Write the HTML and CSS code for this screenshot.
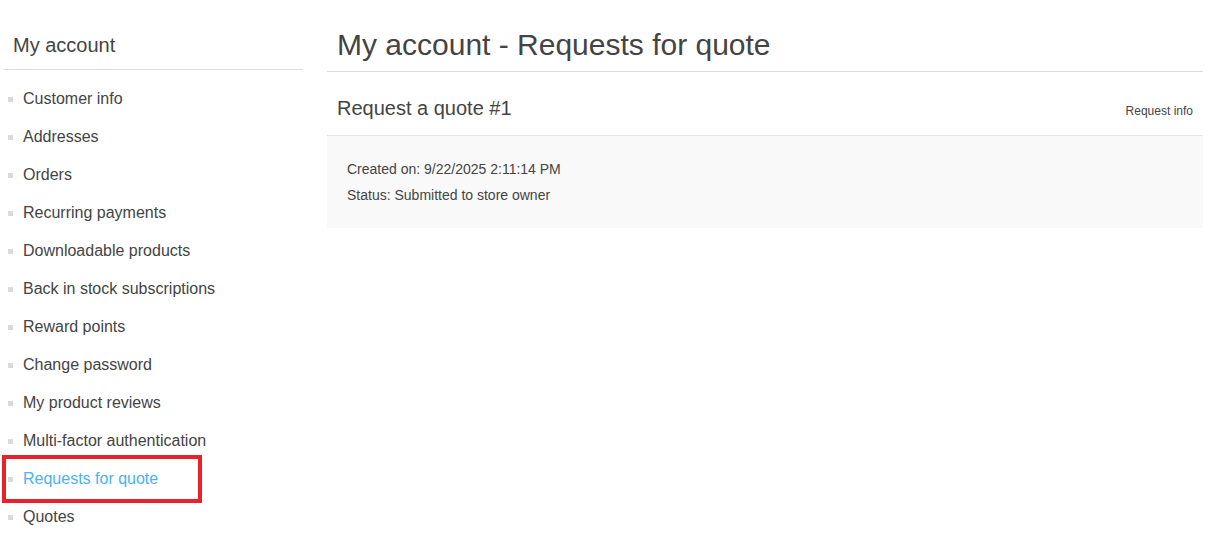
FILE: index.html
```html
<!DOCTYPE html>
<html lang="en">
<head>
<meta charset="utf-8">
<title>My account - Requests for quote</title>
<link rel="stylesheet" href="styles.css">
</head>
<body>
<div class="page">
  <aside class="side">
    <div class="side-title">My account</div>
    <ul class="nav">
      <li><a href="#">Customer info</a></li>
      <li><a href="#">Addresses</a></li>
      <li><a href="#">Orders</a></li>
      <li><a href="#">Recurring payments</a></li>
      <li><a href="#">Downloadable products</a></li>
      <li><a href="#">Back in stock subscriptions</a></li>
      <li><a href="#">Reward points</a></li>
      <li><a href="#">Change password</a></li>
      <li><a href="#">My product reviews</a></li>
      <li><a href="#">Multi-factor authentication</a></li>
      <li class="active"><a href="#">Requests for quote</a><span class="highlight"></span></li>
      <li><a href="#">Quotes</a></li>
    </ul>
  </aside>
  <main class="main">
    <h1 class="page-title">My account - Requests for quote</h1>
    <section class="quote">
      <div class="quote-head">
        <div class="quote-name">Request a quote #1</div>
        <a class="quote-link" href="#">Request info</a>
      </div>
      <div class="quote-body">
        <div class="line">Created on: 9/22/2025 2:11:14 PM</div>
        <div class="line">Status: Submitted to store owner</div>
      </div>
    </section>
  </main>
</div>
</body>
</html>
```

FILE: styles.css
```css
* { box-sizing: border-box; }
html, body { margin: 0; padding: 0; background: #fff; }
body {
  font-family: Arial, "Liberation Sans", Helvetica, sans-serif;
  color: #444;
}
a { color: inherit; text-decoration: none; }

.page {
  display: flex;
  gap: 24px;
  padding: 0 7px 0 3px;
}

.side { width: 300px; flex: none; }
.side-title {
  font-size: 20px;
  line-height: 24px;
  padding: 33px 10px 12px;
  border-bottom: 1px solid #ddd;
}
.nav {
  list-style: none;
  margin: 10px 0 0;
  padding: 0;
}
.nav li {
  position: relative;
  font-size: 16px;
  line-height: 20px;
  padding: 9px 0 9px 20px;
}
.nav li::before {
  content: "";
  position: absolute;
  left: 5px;
  top: 17px;
  width: 5px;
  height: 5px;
  background: #dadada;
}
.nav li.active a { color: #4ab2f1; }
.highlight {
  position: absolute;
  left: -1px;
  top: -5px;
  width: 200px;
  height: 48px;
  border: 4px solid #e8212a;
}

.main { flex: 1; min-width: 0; }
.page-title {
  margin: 0;
  font-weight: normal;
  font-size: 30px;
  line-height: 36px;
  padding: 27px 10px 8px;
  border-bottom: 1px solid #ddd;
}
.quote-head {
  display: flex;
  justify-content: space-between;
  align-items: baseline;
  padding: 24px 10px 15px;
  border-bottom: 1px solid #e4e4e4;
}
.quote-name { font-size: 20px; line-height: 24px; }
.quote-link { font-size: 12px; }
.quote-body {
  background: #f9f9f9;
  padding: 20px 20px 20px;
}
.line {
  font-size: 14px;
  line-height: 26px;
}
```
